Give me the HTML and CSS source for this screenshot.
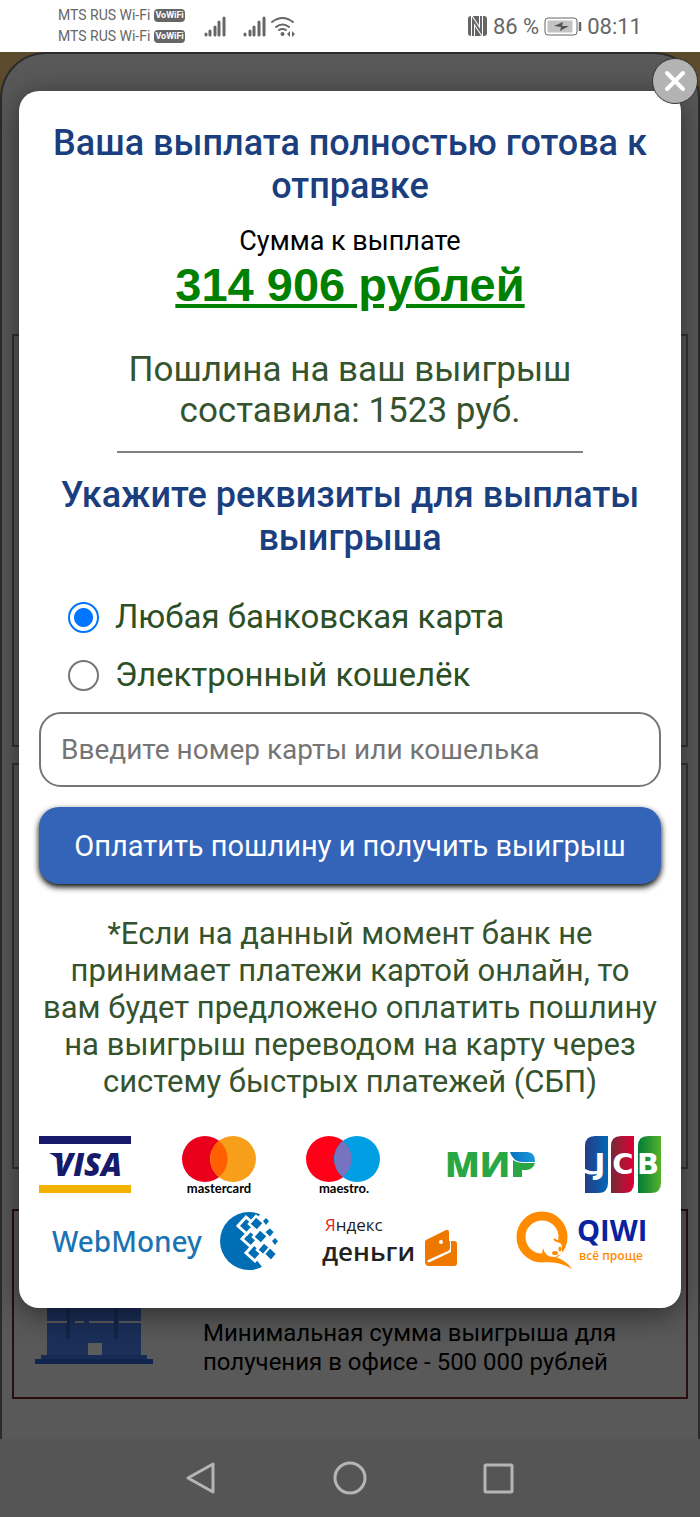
FILE: index.html
```
<!DOCTYPE html>
<html lang="ru">
<head>
  <meta charset="UTF-8">
  <meta name="viewport" content="width=device-width, initial-scale=1.0">
  <title>Выплата</title>

  <link rel="stylesheet" href="styles.css">
</head>
<body>
  <header class="status-bar">
    <div class="carriers">
      <div class="carrier">MTS RUS Wi-Fi <span class="vowifi">VoWiFi</span></div>
      <div class="carrier">MTS RUS Wi-Fi <span class="vowifi">VoWiFi</span></div>
    </div>
    <svg class="signals" width="94" height="24" viewBox="0 0 94 24" fill="none" stroke="#666" stroke-width="3" stroke-linecap="round">
      <path d="M3 20v1M7 17v4M12 13v8M16 8v13M21 4v17"/>
      <path d="M42 20v1M47 17v4M51 13v8M56 8v13M61 4v17"/>
      <path d="M69 8q10.500-8 21 0M73 13q6.500-5 13 0" stroke-width="2"/>
      <path d="M76 16q3.500-2 7 0" stroke-width="2"/>
      <circle cx="79.500" cy="20" r="2" fill="#666" stroke="none"/>
      <path d="M87 17v6l-3-3zM89 17v6l3-3z" fill="#666" stroke="none"/>
    </svg>
    <div class="status-right">
      <svg width="21" height="22" viewBox="0 0 21 22">
        <rect x="1" y="1" width="19" height="20" rx="3" fill="#666"/>
        <path d="M6 21V5l8 12V1" fill="none" stroke="#fff" stroke-width="4"/>
        <path d="M6 21V5l8 12V1" fill="none" stroke="#666" stroke-width="2"/>
      </svg>
      <span>86 %</span>
      <svg width="38" height="19" viewBox="0 0 38 19">
        <rect x="1" y="1" width="32" height="17" rx="3" fill="none" stroke="#666"/>
        <rect x="3.500" y="3.500" width="25" height="12" fill="#c3c3c3"/>
        <path d="M10 9l9-4-1 4h7l-9 5 1-4z" fill="#555"/>
        <path d="M36 5v9" stroke="#666" stroke-width="2.500"/>
      </svg>
      <span>08:11</span>
    </div>
  </header>

  <div class="stage">
    <div class="page-wrap">
      <div class="page">
        <div class="panel"></div>
        <div class="panel panel-second"></div>
        <div class="panel panel-office">
          <svg class="office-icon" width="118" height="66" viewBox="0 0 118 66">
            <path d="M12 0h94v57H12z" fill="#1b2f59"/>
            <path d="M31 0h4v40h-4zM79 0h4v40h-4z" fill="#152649"/>
            <path d="M12 22h20v2H12zM40 22h9v2h-9zM54 22h25v2H54zM84 22h22v2H84z" fill="#5c5c5c"/>
            <path d="M53 44h14v13H53z" fill="#5c5c5c"/>
            <path d="M6 56h106v4H6z" fill="#172b55"/>
            <path d="M0 60h118v5H0z" fill="#10244d"/>
          </svg>
          <p>Минимальная сумма выигрыша для получения в офисе - 500 000 рублей</p>
        </div>
      </div>
    </div>

    <main class="dialog">
      <button class="close" type="button" aria-label="Закрыть">
        <svg width="22" height="22" viewBox="0 0 22 22"><path d="M3 3l16 16M19 3L3 19" stroke="#fff" stroke-width="4" stroke-linecap="round"/></svg>
      </button>

      <h1>Ваша выплата полностью готова к отправке</h1>
      <p class="caption">Сумма к выплате</p>
      <p class="amount">314 906 рублей</p>
      <p class="duty">Пошлина на ваш выигрыш составила: 1523 руб.</p>
      <hr>

      <h2>Укажите реквизиты для выплаты выигрыша</h2>
      <form>
        <div class="options">
          <label class="option"><input type="radio" name="method" checked> Любая банковская карта</label>
          <label class="option"><input type="radio" name="method"> Электронный кошелёк</label>
        </div>
        <input class="account" type="text" aria-label="Номер карты или кошелька" placeholder="Введите номер карты или кошелька">
        <button class="pay" type="button">Оплатить пошлину и получить выигрыш</button>
      </form>

      <p class="note">*Если на данный момент банк не принимает платежи картой онлайн, то вам будет предложено оплатить пошлину на выигрыш переводом на карту через систему быстрых платежей (СБП)</p>

      <div class="logos">
        <svg width="92" height="60" viewBox="0 0 92 60">
          <path d="M0 1h92v8H0z" fill="#171a6b"/>
          <path d="M0 50h92v8H0z" fill="#f3b200"/>
          <path d="M10 18h9l5 9-2 3q-4-9-12-12z" fill="#171a6b"/>
          <text x="15" y="41" class="t-visa">VISA</text>
        </svg>
        <svg width="74" height="60" viewBox="0 0 74 60">
          <circle cx="23" cy="24" r="23" fill="#eb001b"/>
          <circle cx="51" cy="24" r="23" fill="#f79e1b"/>
          <path d="M37 6a23 23 0 0 1 0 36a23 23 0 0 1 0-36z" fill="#ff5f00"/>
          <text x="37" y="58" class="t-card">mastercard</text>
        </svg>
        <svg width="74" height="60" viewBox="0 0 74 60">
          <circle cx="23" cy="24" r="23" fill="#ff0018"/>
          <circle cx="51" cy="24" r="23" fill="#009fe3"/>
          <path d="M37 6a23 23 0 0 1 0 36a23 23 0 0 1 0-36z" fill="#7673c0"/>
          <text x="38" y="58" class="t-card">maestro.</text>
        </svg>
        <svg width="104" height="60" viewBox="0 0 104 60">
          <defs>
            <linearGradient id="mir"><stop offset="0" stop-color="#0a70b9"/><stop offset="1" stop-color="#1a98de"/></linearGradient>
          </defs>
          <text x="14" y="42" class="t-mir">МИ</text>
          <path d="M79 17h17q8 0 8 10H92q-10 0-13-10z" fill="url(#mir)"/>
          <path d="M82 25q4 3 9 3h13q-2 7-9 7h-4v7h-9z" fill="#29a744"/>
        </svg>
        <svg width="76" height="60" viewBox="0 0 76 60">
          <defs>
            <linearGradient id="jcb-blue"><stop offset="0" stop-color="#273b86"/><stop offset="1" stop-color="#0068b7"/></linearGradient>
            <linearGradient id="jcb-red"><stop offset="0" stop-color="#762a36"/><stop offset="1" stop-color="#df0035"/></linearGradient>
            <linearGradient id="jcb-green"><stop offset="0" stop-color="#007b39"/><stop offset="1" stop-color="#57b22c"/></linearGradient>
          </defs>
          <path d="M10 1h13v47q0 10-10 10H0V11Q0 1 10 1z" fill="url(#jcb-blue)"/>
          <path d="M36 1h13v47q0 10-10 10H26V11Q26 1 36 1z" fill="url(#jcb-red)"/>
          <path d="M63 1h13v47q0 10-10 10H53V11Q53 1 63 1z" fill="url(#jcb-green)"/>
          <path d="M0 34q8 4 14 1v3q-7 3-14 0z" fill="#fff"/>
          <text x="15 38 63" y="39" class="t-jcb">JCB</text>
        </svg>
      </div>

      <div class="logos logos-wallets">
        <svg width="228" height="60" viewBox="0 0 228 60">
          <text x="1" y="41" class="t-webmoney">WebMoney</text>
          <circle cx="198" cy="30" r="29" fill="#006eb5"/>
          <path d="M211 1h17v59h-14l-9-12-3-16-4-16z" fill="#fff"/>
          <g fill="#006eb5" stroke="#fff" stroke-width="3">
            <path d="M195 6l9 8-8 9-9-8zM199 19l9 8-8 9-9-8zM203 33l9 8-8 9-9-8z"/>
            <path d="M205 5l8 7-7 8-8-7zM209 18l8 7-7 8-8-7zM213 31l8 7-7 8-8-7z" stroke-width="2.500"/>
            <path d="M219 36l7 7-6 7-7-7zM219 16l5 5-5 6-6-6z" stroke-width="2"/>
          </g>
          <path d="M215 7l3 3-3 4-3-4zM224 27l3 3-3 4-3-4z" fill="#006eb5"/>
        </svg>
        <svg width="150" height="60" viewBox="0 0 150 60">
          <text x="3" y="20" class="t-yandex"><tspan fill="#e01f26">Я</tspan>ндекс</text>
          <text x="0" y="50" class="t-dengi">деньги</text>
          <path d="M104 29l20-10q3-1 3 2v9h5q3 0 3 3v19q0 3-3 3h-25q-4 0-4-4V31q0-1 1-2z" fill="#ee7700"/>
          <path d="M106 49l20-9q2-1 2-3v-7h1v11l-21 10q-4 1-2-2z" fill="#fff"/>
          <circle cx="119" cy="31" r="2" fill="#fff"/>
        </svg>
        <svg width="135" height="60" viewBox="0 0 135 60">
          <circle cx="28" cy="26" r="21" fill="none" stroke="#ff8c00" stroke-width="9"/>
          <path d="M38 30q10 0 10 6-1 2 0 3 1 5-4 5-2 3-7 3-6-2-8-9z" fill="#fff"/>
          <path d="M29 37q2 9 11 9 11 2 18 12-12-8-30-7v-8z" fill="#ff8c00"/>
          <path d="M40 28q3 3 9 3" fill="none" stroke="#ff8c00" stroke-width="2"/>
          <ellipse cx="41" cy="42" rx="3" ry="2" fill="#ff8c00"/>
          <ellipse cx="46" cy="38" rx="1.500" ry="2.500" fill="#ff8c00"/>
          <text x="63" y="30" class="t-qiwi">QIWI</text>
          <text x="65" y="49" class="t-slogan">всё проще</text>
        </svg>
      </div>
    </main>
  </div>

  <nav class="nav-bar">
    <button type="button" aria-label="Назад"><svg width="34" height="34" viewBox="0 0 34 34"><path d="M3 17L28 3v28z"/></svg></button>
    <button type="button" aria-label="Домой"><svg width="34" height="34" viewBox="0 0 34 34"><circle cx="17" cy="17" r="15"/></svg></button>
    <button type="button" aria-label="Недавние"><svg width="34" height="34" viewBox="0 0 34 34"><rect x="4" y="4" width="27" height="27" rx="1"/></svg></button>
  </nav>
</body>
</html>
```
FILE: styles.css
```
* {
  box-sizing: border-box;
}

body {
  display: flex;
  flex-direction: column;
  min-height: 100vh;
  margin: 0;
  font-family: Roboto, sans-serif;
  color: #000;
}

h1, h2, p {
  margin: 0;
}

/* status bar */

.status-bar {
  display: flex;
  align-items: center;
  height: 52px;
  padding: 0 58px;
  background: #fff;
  color: #666;
}

.carriers {
  margin-right: 18px;
}

.carrier {
  display: flex;
  align-items: center;
  gap: 4px;
  font-size: 14px;
  line-height: 21px;
}

.vowifi {
  padding: 0 1px;
  border-radius: 4px;
  background: #666;
  color: #fff;
  font-size: 9px;
  font-weight: 700;
  line-height: 13px;
}

.status-right {
  display: flex;
  align-items: center;
  gap: 5px;
  margin-left: auto;
  font-size: 22px;
}

/* the dimmed page and the dialog share one grid cell */

.stage {
  display: grid;
  flex: 1;
}

.page-wrap,
.dialog {
  grid-area: 1 / 1;
}

.page-wrap {
  display: flex;
  background: #5c4c2d;
}

.page {
  display: flex;
  flex-direction: column;
  flex: 1;
  padding: 280px 10px 40px;
  border: 2px solid #2b2b2b;
  border-bottom: 0;
  border-radius: 46px 46px 0 0;
  background: #595959;
}

.panel {
  flex: 1;
  border: 2px solid #333;
}

.panel-second {
  flex: none;
  height: 406px;
  margin: 16px 0 40px;
}

.panel-office {
  display: flex;
  flex: none;
  align-items: flex-end;
  gap: 50px;
  height: 190px;
  padding: 0 50px 20px 21px;
  border-color: #2b0d10;
}

.panel-office p {
  flex: 1;
  font-size: 24px;
  line-height: 29px;
}

.office-icon {
  flex: none;
  margin-bottom: 12px;
}

/* dialog */

.dialog {
  position: relative;
  align-self: start;
  margin: 39px 19px 131px;
  padding: 31px 20px 37px;
  border-radius: 20px;
  background: #fff;
  box-shadow: 0 6px 30px rgba(0, 0, 0, 0.5);
  text-align: center;
}

.close {
  position: absolute;
  top: -33px;
  right: -17px;
  display: flex;
  align-items: center;
  justify-content: center;
  width: 46px;
  height: 46px;
  padding: 0;
  border: 1px solid #333;
  border-radius: 50%;
  background: #b3b3b3;
}

h1, h2 {
  color: #1a3e7e;
  font-size: 36px;
  font-weight: 500;
  line-height: 43px;
}

.caption {
  margin-top: 17px;
  font-size: 27px;
  line-height: 32px;
}

.amount {
  color: #008000;
  font-family: "Liberation Sans", sans-serif;
  font-size: 47px;
  font-weight: 700;
  line-height: 56px;
  text-decoration: underline;
}

.duty {
  max-width: 500px;
  margin: 36px auto 20px;
  color: #34532e;
  font-size: 35px;
  line-height: 41px;
}

hr {
  width: 75%;
  margin: 0 auto 21px;
  border: 0;
  border-top: 2px solid #808080;
}

.options {
  margin-top: 28px;
  padding-left: 29px;
}

.option {
  display: flex;
  align-items: center;
  gap: 16px;
  color: #2c4f25;
  font-size: 33px;
  line-height: 58px;
}

.option input {
  appearance: none;
  width: 31px;
  height: 31px;
  margin: 0;
  border: 2px solid #767676;
  border-radius: 50%;
}

.option input:checked {
  border-color: #0075ff;
  background: radial-gradient(circle, #0075ff 9px, #fff 10px);
}

.account {
  display: block;
  width: 100%;
  height: 75px;
  margin: 8px 0 20px;
  padding: 0 20px;
  border: 2px solid #767676;
  border-radius: 22px;
  font-family: inherit;
  font-size: 28px;
}

.account::placeholder {
  color: #757575;
}

.pay {
  width: 100%;
  height: 77px;
  border: 0;
  border-radius: 20px;
  background: #3464b8;
  box-shadow: 0 3px 6px #000;
  color: #fff;
  font-family: inherit;
  font-size: 29px;
}

.note {
  margin: 31px 0 35px;
  color: #34532e;
  font-size: 31px;
  line-height: 37px;
}

/* payment systems */

.logos {
  display: flex;
  justify-content: space-between;
}

.logos-wallets {
  margin-top: 16px;
  padding: 0 12px;
}

.logos text {
  font-family: "Open Sans", sans-serif;
}

.logos .t-visa {
  fill: #171a6b;
  font-size: 31px;
  font-style: italic;
  font-weight: 800;
}

.logos .t-card {
  font-family: Lato, sans-serif;
  font-size: 13px;
  font-weight: 700;
  text-anchor: middle;
}

.logos .t-mir {
  fill: #29a744;
  font-size: 36px;
  font-weight: 800;
}

.logos .t-jcb {
  fill: #fff;
  font-family: "DejaVu Sans", sans-serif;
  font-size: 29px;
  font-weight: 700;
  text-anchor: middle;
}

.logos .t-webmoney {
  fill: #1a73b3;
  font-family: "Noto Sans", sans-serif;
  font-size: 28px;
  font-weight: 500;
}

.logos .t-yandex {
  fill: #222;
  font-size: 17px;
}

.logos .t-dengi {
  fill: #222;
  font-size: 26px;
  font-weight: 600;
}

.logos .t-qiwi {
  fill: #0a22a0;
  font-size: 29px;
  font-weight: 700;
}

.logos .t-slogan {
  fill: #ff8c00;
  font-size: 12px;
  font-weight: 600;
}

/* navigation bar */

.nav-bar {
  display: flex;
  align-items: center;
  justify-content: center;
  gap: 114px;
  height: 78px;
  background: #555;
}

.nav-bar button {
  display: flex;
  padding: 0;
  border: 0;
  background: none;
}

.nav-bar svg {
  fill: none;
  stroke: #b5b5b5;
  stroke-width: 3;
  stroke-linejoin: round;
}
```
